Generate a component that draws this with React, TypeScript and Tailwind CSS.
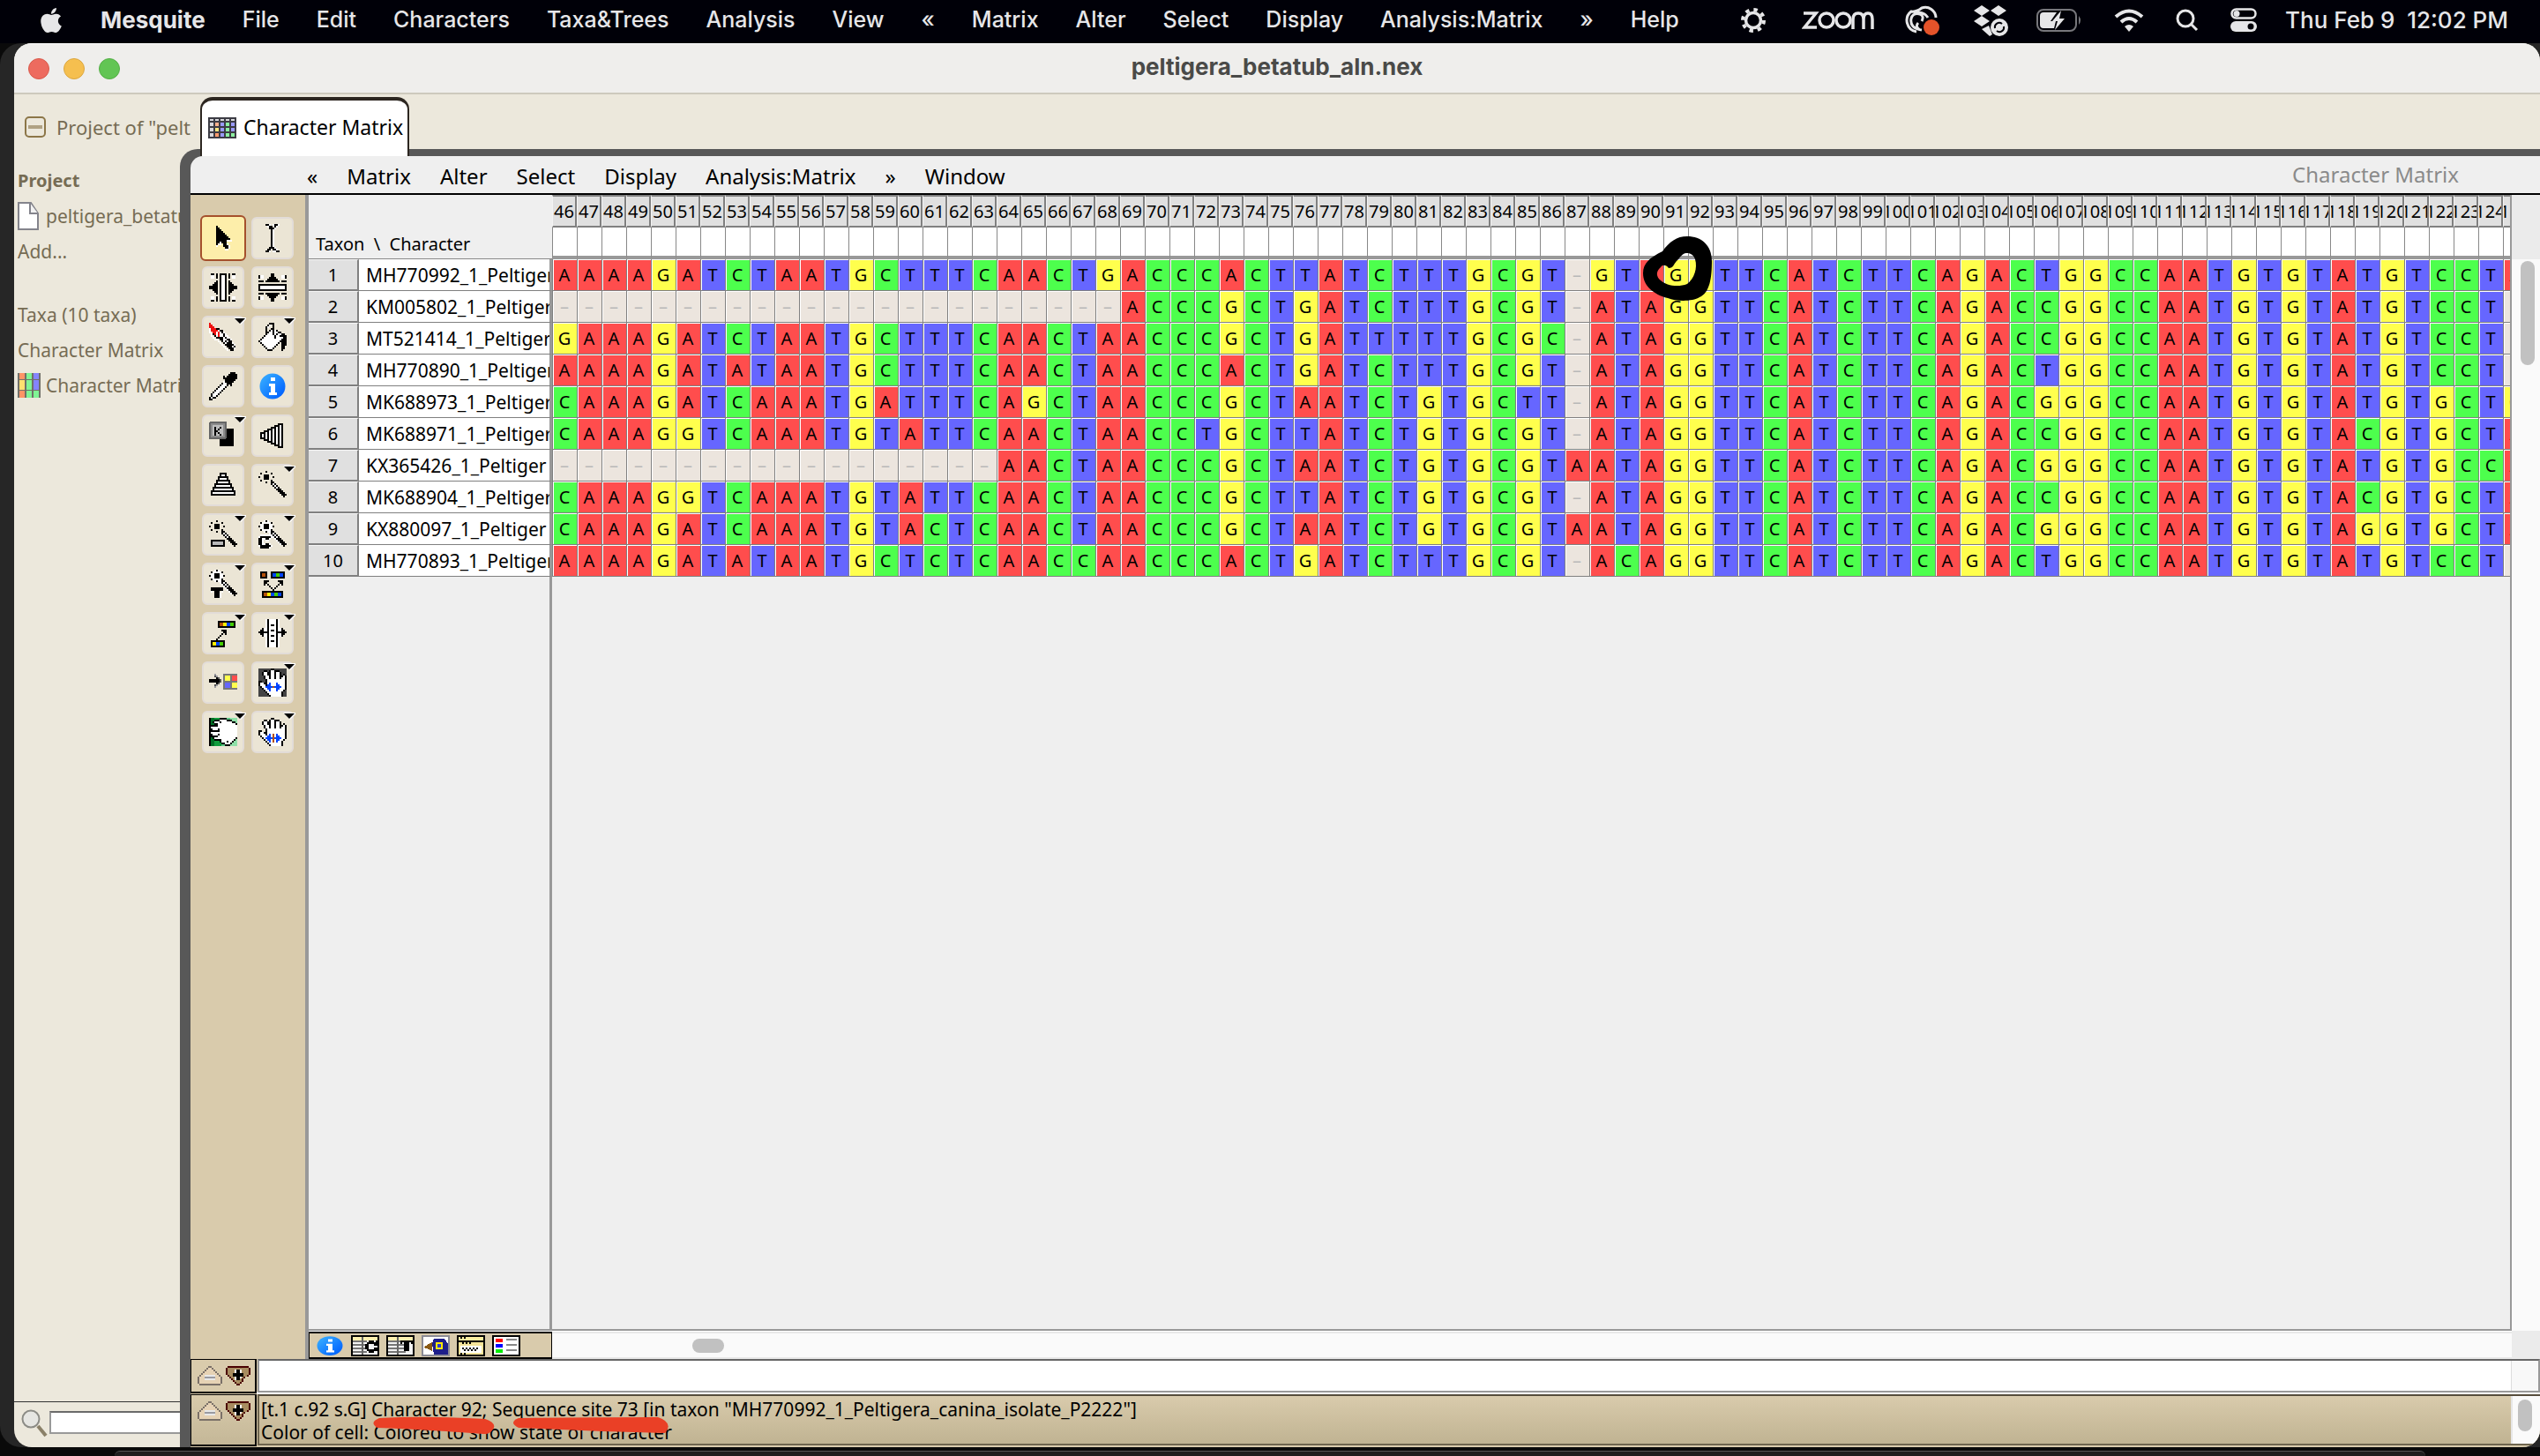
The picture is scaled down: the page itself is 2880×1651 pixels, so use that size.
import React from "react";

const SANS = "font-['Noto_Sans','DejaVu_Sans',sans-serif]";
const SYSTEM = "font-[Inter,'Liberation_Sans',sans-serif]";

/* ---------- matrix data ---------- */

const FIRST_CHARACTER = 46;
const LAST_CHARACTER = 125;
const characters = Array.from({ length: LAST_CHARACTER - FIRST_CHARACTER + 1 }, (_, i) => FIRST_CHARACTER + i);

const taxa = [
  { name: "MH770992_1_Peltiger", seq: "AAAAGATCTAATGCTTTCAACTGACCC" + "ACTTATCTTTGCGT-GTAGGTTCATCT" + "TCAGACTGGCCAATGTGTATGTCCT" + "A" },
  { name: "KM005802_1_Peltiger", seq: "-----------------------ACCC" + "GCTGATCTTTGCGT-ATAGGTTCATCT" + "TCAGACCGGCCAATGTGTATGTCCT" + "-" },
  { name: "MT521414_1_Peltiger", seq: "GAAAGATCTAATGCTTTCAACTAACCC" + "GCTGATTTTTGCGC-ATAGGTTCATCT" + "TCAGACCGGCCAATGTGTATGTCCT" + "-" },
  { name: "MH770890_1_Peltiger", seq: "AAAAGATATAATGCTTTCAACTAACCC" + "ACTGATCTTTGCGT-ATAGGTTCATCT" + "TCAGACTGGCCAATGTGTATGTCCT" + "-" },
  { name: "MK688973_1_Peltiger", seq: "CAAAGATCAAATGATTTCAGCTAACCC" + "GCTAATCTGTGCTT-ATAGGTTCATCT" + "TCAGACGGGCCAATGTGTATGTGCT" + "G" },
  { name: "MK688971_1_Peltiger", seq: "CAAAGGTCAAATGTATTCAACTAACCT" + "GCTTATCTGTGCGT-ATAGGTTCATCT" + "TCAGACCGGCCAATGTGTACGTGCT" + "A" },
  { name: "KX365426_1_Peltiger", seq: "------------------AACTAACCC" + "GCTAATCTGTGCGTAATAGGTTCATCT" + "TCAGACGGGCCAATGTGTATGTGCC" + "A" },
  { name: "MK688904_1_Peltiger", seq: "CAAAGGTCAAATGTATTCAACTAACCC" + "GCTTATCTGTGCGT-ATAGGTTCATCT" + "TCAGACCGGCCAATGTGTACGTGCT" + "A" },
  { name: "KX880097_1_Peltiger", seq: "CAAAGATCAAATGTACTCAACTAACCC" + "GCTAATCTGTGCGTAATAGGTTCATCT" + "TCAGACGGGCCAATGTGTAGGTGCT" + "A" },
  { name: "MH770893_1_Peltiger", seq: "AAAAGATATAATGCTCTCAACCAACCC" + "ACTGATCTTTGCGT-ACAGGTTCATCT" + "TCAGACTGGCCAATGTGTATGTCCT" + "-" },
];

const stateColor: Record<string, string> = {
  A: "bg-[#ff4d4d]",
  C: "bg-[#4dff4d]",
  G: "bg-[#ffff4d]",
  T: "bg-[#6666ff]",
  "-": "bg-[#ece5de] text-[#b8b8b8]",
};

/* ---------- pixel art ---------- */

const inks: Record<string, string> = {
  "#": "#000000", w: "#ffffff", r: "#ee1111", g: "#b8b8b8", b: "#1f1f7a", B: "#0044ff", y: "#ffee00",
  o: "#b4500a", G: "#44cc00", d: "#555555", n: "#8a5a14", m: "#4a0000", t: "#a88c60", c: "#fff3c0", k: "#7a7068", p: "#e6d2b4",
  l: "#e8e8e8", s: "#9a9aa0",
};

function transpose(rows: string[]) {
  return rows[0].split("").map((_, x) => rows.map((row) => row[x] ?? ".").join(""));
}

function Dots({ rows, x = 0, y = 0 }: { rows: string[]; x?: number; y?: number }) {
  return (
    <g>
      {rows.flatMap((row, j) =>
        row.split("").map((ch, i) =>
          inks[ch] ? <rect key={`${i}-${j}`} x={x + i} y={y + j} width="1" height="1" fill={inks[ch]} /> : null,
        ),
      )}
    </g>
  );
}

function Art({ children }: { children: React.ReactNode }) {
  return (
    <svg viewBox="0 0 16 16" className="size-8" shapeRendering="crispEdges" aria-hidden="true">
      {children}
    </svg>
  );
}

const arrow = [
  "................", "....#...........", "....##..........", "....###.........", "....####........", "....#####.......",
  "....######......", "....#######.....", "....########....", "....######www...", "....##w###......", "....#ww.##w.....",
  "....w...###w....", ".........##w....", ".........ww.....",
];
const iBeam = [
  "....##w.w##w....", ".....w##.#w.....", "......###w......",
  ...Array(10).fill(".......#w......."),
  "......###w......", ".....##.##w.....", "....##w.ww##....",
];
const columnSelect = [
  ".##.#.####.#.##.", ".ww.#.#ww#.#.ww.", ".ww.#.#ww#.#.ww.", "......#ww#......", "....#.#ww#.#....", "...##.#ww#.##...",
  "..###.#ww#.###..", "#####.#ww#.#####", "#####.#ww#.#####", "..###.#ww#.###..", "...##.#ww#.##...", "....#.#ww#.#....",
  "......#ww#......", ".ww.#.#ww#.#.ww.", ".ww.#.#ww#.#.ww.", ".##.#.####.#.##.",
];
const brush = [
  "r...............", "rr..............", "rrr.............", "wrrr##..........", "wrrrrw##........", "w.rrwrw#w.......",
  ".w#rwrww#w......", ".w.#wrww#ww.....", "..w.####w#ww....", "...ww.##ww##w...", ".....w.#w#w##...", "......w.#w###w..",
  ".......w.#####w.", "........w.###w#.", ".........w.###w.", "..........w.##..",
];
const bucket = [
  "......###.......", ".....#w.#.......", "....#w..#.......", "....#..##.......", "....#.#w#w#.....", "....##ww#ww##...",
  "....#www#w#ww##.", "...#wwwww#ww####", "..#wwwwww#wwww##", ".#wwwwwwwwwww###", "#wwwwwwwwwww####", ".#wwwwwwwww#.###",
  "..#wwwwwww#..###", "...#wwwww#...##.", "....#www#....##.", ".....###.....#..",
];
const dropper = [
  "............###.", "...........#####", "........#.######", "........########", ".........######.", "........w#####..",
  ".......#ww###...", "......#www#.#...", ".....#www#......", "....#www#.......", "...#www#........", "..#www#.........",
  ".#www#..........", ".#ww#...........", "#w##............", "##..............",
];
const wand = [
  "....#...........", ".#.....#........", "...###..........", "#..###..#.......", "...###..........", ".#.....#........",
  "....#..##.......", ".......#w#......", "........#w#.....", ".........#w#....", "..........###...", "...........###..",
  "............###.", ".............###", "..............#.",
];
const halo = [
  "...www..........", ".wwwwwww........", ".wwwwwww........", "wwwwwwwww.......", ".wwwwwww........", ".wwwwwww........",
  "...wwwwww.......", "......w..w......", ".......w..w.....", "........w..w....", ".........w..w...", "..........w..w..",
  "...........w..w.", "............w..w",
];
const letterC = [".wwwwww.", "w######w", "##ww##w.", "##w.ww..", "##w.....", "##ww##w.", "w######w", ".#####w."];
const letterT = ["#######.", "#######.", "w.###.w.", "..###w..", "..###w..", "..###w.."];
const joinArrows = ["###.....###", "##.......##", "#.#.....#.#", "...#...#...", "....#.#....", ".....#....."];
const upArrow = ["...###", "....##", "...#.#", "..#...", ".#....", "#....."];
const doubleArrow = ["..B...B..", ".BB...BB.", "BBBBoBBBB", ".BB...BB.", "..B...B.."];
const handRows = [
  ".......##.......", "...##.#ww###....", "..#ww##ww#ww#...", "..#ww##ww#ww#.#.", "...#ww#ww#ww##w#", "...#ww#ww#ww#ww#",
  "....#wwwwwwwwww#", "##..#wwwwwwwwww#", "#ww##wwwwwwwwww#", "#www#wwwwwwwwww#", ".#wwwwwwwwwwwww#", "..#wwwwwwwwwwww#",
  "...#wwwwwwwwww#.", "....#wwwwwwww#..", ".....#wwwwwww#..", "......#wwwwww#..",
];
const grabRows = [
  "......####......", "...###wwww###...", "..#www#wwwwww##.", "...##wwwwwwwwww#", ".####wwwwwwwwwww", "#wwwwwwwwwwwwwww",
  "##www#wwwwwwwwww", ".#####wwwwwwwwww", "#wwwwwwwwwwwwwww", "##www#wwwwwwwwww", ".####wwwwwwwwwww", "..#wwwwwwwwwwww#",
  "...####wwwwwww#.", "......#www#ww#..", ".......##www#...", ".........###....",
];

function Strip({ x, y, colors }: { x: number; y: number; colors: string }) {
  return (
    <>
      <rect x={x} y={y} width={colors.length * 2 + 2} height="4" fill="#000" />
      {colors.split("").map((c, i) => (
        <rect key={i} x={x + 1 + i * 2} y={y + 1} width="2" height="2" fill={inks[c]} />
      ))}
    </>
  );
}

function Staircase({ upright = false }: { upright?: boolean }) {
  return (
    <g transform={upright ? "rotate(90 8 8)" : undefined}>
      {[4, 6, 8, 10, 12, 14].map((h, i) => (
        <rect key={h} x={1 + i * 2} y={8 - h / 2} width="3" height={h} fill="#000" />
      ))}
      {[4, 6, 8, 10, 12, 14].map((h, i) => (
        <rect key={h} x={2 + i * 2} y={9 - h / 2} width="1" height={h - 2} fill="#fff" />
      ))}
    </g>
  );
}

function InfoIcon({ className }: { className: string }) {
  return (
    <svg viewBox="0 0 32 32" preserveAspectRatio="none" className={className} aria-hidden="true">
      <defs>
        <linearGradient id="info" x1="0" y1="0" x2="1" y2="1">
          <stop offset="0.2" stopColor="#2fa2ff" />
          <stop offset="0.9" stopColor="#0061ff" />
        </linearGradient>
      </defs>
      <circle cx="16" cy="16" r="14.5" fill="url(#info)" />
      <path d="M14 6h5v4h-5zM12 13h7v10h2v3h-9v-3h2v-7h-2z" fill="#fff" />
    </svg>
  );
}

const tools: { label: string; menu?: boolean; icon: React.ReactNode }[] = [
  { label: "Arrow", icon: <Art><Dots rows={arrow} /></Art> },
  { label: "Edit text", icon: <Art><Dots rows={iBeam} /></Art> },
  { label: "Select columns", icon: <Art><Dots rows={columnSelect} /></Art> },
  { label: "Select rows", icon: <Art><Dots rows={transpose(columnSelect)} /></Art> },
  { label: "Brush", menu: true, icon: <Art><Dots rows={brush} /></Art> },
  { label: "Fill", menu: true, icon: <Art><Dots rows={bucket} /></Art> },
  { label: "Pick color", icon: <Art><Dots rows={dropper} /></Art> },
  { label: "Information", icon: <InfoIcon className="size-8" /> },
  {
    label: "Key states", menu: true,
    icon: (
      <Art>
        <rect x="6" y="4" width="8" height="10" fill="#000" />
        <rect x="0" y="0" width="10" height="10" rx="1" fill="#666" />
        <rect x="1" y="1" width="8" height="8" fill="#8c8c8c" />
        <rect x="2" y="2" width="6" height="6" fill="#bdbdbd" />
        <Dots x={3} y={3} rows={["#..#", "#.#.", "##..", "#.#.", "#..#"]} />
      </Art>
    ),
  },
  { label: "Widen right", icon: <Art><Staircase /></Art> },
  { label: "Widen down", icon: <Art><Staircase upright /></Art> },
  { label: "Wand", menu: true, icon: <Art><Dots rows={wand} /></Art> },
  {
    label: "Wand for rows", menu: true,
    icon: (
      <Art>
        <Dots rows={wand} />
        <rect x="1" y="11" width="8" height="4" fill="#000" />
        <rect x="2" y="12" width="6" height="2" fill="#b8b8b8" />
      </Art>
    ),
  },
  { label: "Wand for characters", menu: true, icon: <Art><Dots rows={halo} /><Dots rows={wand} /><Dots rows={letterC} y={8} /></Art> },
  { label: "Wand for taxa", menu: true, icon: <Art><Dots rows={halo} /><Dots rows={wand} /><Dots rows={letterT} x={1} y={10} /></Art> },
  {
    label: "Split block", menu: true,
    icon: <Art><Strip x={1} y={1} colors="o" /><Strip x={7} y={1} colors="BGB" /><Dots rows={joinArrows} x={3} y={6} /><Strip x={2} y={12} colors="oyBGB" /></Art>,
  },
  {
    label: "Move block", menu: true,
    icon: <Art><Strip x={5} y={1} colors="oyBG" /><Dots rows={upArrow} x={4} y={6} /><Strip x={1} y={12} colors="yBG" /></Art>,
  },
  {
    label: "Spread columns", menu: true,
    icon: (
      <Art>
        <rect x="4" y="0" width="8" height="16" fill="#fff" />
        <path d="M5 0h1v16h-1zM10 0h1v16h-1zM7 3h2v1h-2zM7 6h2v1h-2zM7 9h2v1h-2zM7 12h2v1h-2z" fill="#000" />
        <Dots y={5} rows={["..#w........w#..", ".##w........w##.", "#####......#####", ".##w........w##.", "..#w........w#.."]} />
      </Art>
    ),
  },
  {
    label: "Send to cells",
    icon: (
      <Art>
        <Dots y={3} rows={["...s....", "...ds...", "....#d..", "######d.", "######d.", "....#d..", "...ds...", "...s...."]} />
        <rect x="8" y="3" width="8" height="9" fill="#777" />
        <rect x="9" y="4" width="3" height="3" fill="#ffff4d" />
        <rect x="13" y="4" width="3" height="3" fill="#ff4d4d" />
        <rect x="9" y="8" width="3" height="3" fill="#6666ff" />
        <rect x="13" y="8" width="3" height="3" fill="#ffff4d" />
      </Art>
    ),
  },
  { label: "Shift block", menu: true, icon: <Art><rect width="16" height="16" fill="#444" /><Dots rows={handRows} /><Dots rows={doubleArrow} x={4} y={8} /></Art> },
  {
    label: "Grab sequence", menu: true,
    icon: (
      <Art>
        <rect width="16" height="16" fill="#8fe0a8" />
        <rect width="12" height="16" fill="#5cc484" />
        <rect width="7" height="16" fill="#109c3c" />
        <rect width="3" height="16" fill="#006e24" />
        <rect width="1" height="16" fill="#000" />
        <Dots rows={grabRows} />
      </Art>
    ),
  },
  { label: "Hand", menu: true, icon: <Art><Dots rows={handRows} /><Dots rows={doubleArrow} x={4} y={9} /><rect x="8" y="9" width="1" height="5" fill="#b4500a" /></Art> },
];

/* ---------- macOS menu bar ---------- */

const appMenus = ["File", "Edit", "Characters", "Taxa&Trees", "Analysis", "View", "«", "Matrix", "Alter", "Select", "Display", "Analysis:Matrix", "»", "Help"];

function MenuBar() {
  return (
    <header className={`${SYSTEM} flex h-[49px] shrink-0 items-center bg-[#000008] pb-1 text-[25px] font-medium text-[#e6e6e8]`}>
      <svg viewBox="0 0 384 512" className="ml-11 h-8 w-7 fill-[#e6e6e8]" aria-hidden="true">
        <path d="M318.700 268.700c-.2-36.700 16.400-64.400 50-84.800-18.800-26.900-47.200-41.700-84.700-44.600-35.500-2.800-74.300 20.700-88.500 20.700-15 0-49.400-19.700-76.400-19.700C63.300 141.200 4 184.800 4 273.500q0 39.300 14.400 81.200c12.800 36.700 59 126.700 107.200 125.200 25.200-.6 43-17.900 75.800-17.900 31.800 0 48.300 17.900 76.400 17.900 48.600-.7 90.400-82.500 102.600-119.300-65.200-30.700-61.700-90-61.700-91.900zm-56.600-164.200c27.300-32.400 24.800-61.900 24-72.500-24.100 1.400-52 16.400-67.900 34.900-17.500 19.800-27.800 44.300-25.600 71.900 26.100 2 49.900-11.400 69.500-34.300z" />
      </svg>
      <nav className="ml-[42px] flex items-center gap-[42px]" aria-label="Application menus">
        <button className="text-[26px] font-bold">Mesquite</button>
        {appMenus.map((m) => <button key={m}>{m}</button>)}
      </nav>
      <div className="ml-auto flex items-center pr-9">
        <svg viewBox="0 0 30 30" className="mr-10 size-[30px]" fill="none" stroke="#e6e6e8" aria-hidden="true">
          <circle cx="15" cy="15" r="8.500" strokeWidth="3.500" />
          <circle cx="15" cy="15" r="12" strokeWidth="4" strokeDasharray="4.400 5.025" />
        </svg>
        <svg viewBox="0 0 82 24" className="mr-8 h-6 w-[82px]" fill="none" stroke="#e6e6e8" strokeWidth="3.500" aria-hidden="true">
          <path d="M2 4h14L3 20h14M58 22V11q0-7 6-7t6 7v11M70 11q0-7 5-7t5 7v11" />
          <circle cx="28" cy="12" r="8" />
          <circle cx="47" cy="12" r="8" />
        </svg>
        <svg viewBox="0 0 44 34" className="mr-9 h-[34px] w-11" fill="none" stroke="#e6e6e8" strokeWidth="3" aria-hidden="true">
          <path d="M16 30A13 13 0 0 1 10 7Q16 8 22 3A12 12 0 0 1 38 14M22 28Q8 26 10 15Q12 8 20 10Q25 12 22 18M20 28Q14 24 18 20M14 9Q24 6 29 14" />
          <circle cx="33" cy="25" r="9" fill="#e4532a" stroke="none" />
        </svg>
        <svg viewBox="0 0 40 36" className="mr-8 h-9 w-10 fill-[#e6e6e8]" aria-hidden="true">
          <path d="M10 1l9 6-9 6-9-6zM29 1l9 6-9 6-9-6zM10 13l9 6-9 6-9-6zM10 28l8-4 4 10-3 2z" />
          <circle cx="30" cy="26" r="10" />
          <path d="M25 27a5 5 0 0 1 8-5M35 25a5 5 0 0 1-8 5" stroke="#000008" strokeWidth="2" fill="none" />
        </svg>
        <svg viewBox="0 0 52 26" className="mr-9 h-[26px] w-[52px]" aria-hidden="true">
          <rect x="1" y="1" width="44" height="24" rx="7" fill="none" stroke="#77777c" strokeWidth="2" />
          <path d="M48 8q4 5 0 10z" fill="#77777c" />
          <path d="M8 4h15l-7 10h6l-2 8H8q-4 0-4-4V8q0-4 4-4zM28 2L18 14h6l-3 10 11-13h-6z" fill="#e6e6e8" />
        </svg>
        <svg viewBox="0 0 34 26" className="mr-9 h-[26px] w-[34px]" fill="none" stroke="#e6e6e8" strokeWidth="4" aria-hidden="true">
          <path d="M2 9Q17-4 32 9M8 15Q17 7 26 15" />
          <path d="M12 20q5-4 10 0l-5 6z" fill="#e6e6e8" stroke="none" />
        </svg>
        <svg viewBox="0 0 26 26" className="mr-9 size-[26px]" fill="none" stroke="#e6e6e8" strokeWidth="3" aria-hidden="true">
          <circle cx="11" cy="11" r="9" />
          <path d="M17 17l7 7" />
        </svg>
        <svg viewBox="0 0 30 28" className="mr-8 h-7 w-[30px]" aria-hidden="true">
          <rect x="1.500" y="1.500" width="27" height="10" rx="5" fill="none" stroke="#e6e6e8" strokeWidth="2.500" />
          <circle cx="7" cy="6.500" r="3.500" fill="#e6e6e8" />
          <rect y="15" width="30" height="12" rx="6" fill="#e6e6e8" />
          <circle cx="23" cy="21" r="3.500" fill="#000008" />
        </svg>
        <time className="text-[26px] whitespace-pre">Thu Feb 9  12:02 PM</time>
      </div>
    </header>
  );
}

/* ---------- window parts ---------- */

function TitleBar() {
  return (
    <div className={`${SYSTEM} relative flex h-[58px] shrink-0 items-center border-b-2 border-[#cdc9bd] border-t border-t-white bg-[#efeeec] pl-4`}>
      <div className="flex gap-4">
        <button aria-label="Close" className="size-6 rounded-full border border-[#d85a4c] bg-[#ed6b5f]" />
        <button aria-label="Minimize" className="size-6 rounded-full border border-[#dba63f] bg-[#f5bf4f]" />
        <button aria-label="Zoom" className="size-6 rounded-full border border-[#54ae46] bg-[#62c554]" />
      </div>
      <h1 className="absolute inset-x-0 pb-1 text-center text-[26px] font-bold text-[#4a4a48]">peltigera_betatub_aln.nex</h1>
    </div>
  );
}

function TabStrip() {
  return (
    <div className="flex h-[62px] shrink-0 bg-[#ece8dc]">
      <div className="flex w-[208px] items-center gap-3 overflow-hidden pl-3 pt-3 text-[22px] whitespace-nowrap text-[#766c54]">
        <svg viewBox="0 0 24 24" className="size-6 shrink-0" fill="none" aria-hidden="true">
          <rect x="1" y="1" width="22" height="22" rx="4" stroke="#8c7648" strokeWidth="2" />
          <path d="M4 12h16" stroke="#b0a284" strokeWidth="4" />
        </svg>
        <span>Project of "pelt</span>
      </div>
      <button className="relative z-10 ml-[3px] mt-[3px] flex h-[67px] w-[237px] items-center gap-2 rounded-t-[14px] border-2 border-t-4 border-b-0 border-[#2c2620] bg-white pl-[7px] pb-0.5 text-[23px] whitespace-nowrap text-black">
        <svg viewBox="0 0 32 24" className="h-6 w-8 shrink-0" shapeRendering="crispEdges" aria-hidden="true">
          <rect width="32" height="24" fill="#3c3c44" />
          {[0, 1, 2, 3].map((j) =>
            [0, 1, 2, 3, 4].map((i) => {
              const body = [["#ffb08c", "#9a9aff", "#8cf0a0", "#9a9aff"], ["#ffe880", "#9a9aff", "#8cf0a0", "#9a9aff"], ["#ff9a6c", "#9a9aff", "#8cf0a0", "#8cf0a0"]];
              const fill = j === 0 || i === 0 ? "#d8d8dc" : body[j - 1][i - 1];
              return <rect key={`${i}-${j}`} x={2 + i * 6} y={j === 0 ? 2 : j * 6} width="4" height={j === 0 ? 2 : 4} fill={fill} />;
            }),
          )}
        </svg>
        Character Matrix
      </button>
    </div>
  );
}

function Sidebar() {
  return (
    <aside className="flex w-[188px] shrink-0 flex-col overflow-hidden text-[21px] leading-10 whitespace-nowrap text-[#766c54]">
      <div className="flex-1 pl-1">
        <h2 className="mt-4 text-[20px] font-bold">Project</h2>
        <a href="#file" className="flex items-center gap-2">
          <svg viewBox="0 0 24 32" className="h-8 w-6 shrink-0" aria-hidden="true">
            <path d="M1 1h14l8 12v18H1z" fill="#fff" stroke="#84848c" strokeWidth="2" />
            <path d="M14 1v12h9" fill="#f2f2f2" stroke="#84848c" strokeWidth="2" />
          </svg>
          peltigera_betatu
        </a>
        <a href="#add" className="block">Add...</a>
        <a href="#taxa" className="mt-8 block">Taxa (10 taxa)</a>
        <a href="#matrices" className="block">Character Matrix</a>
        <a href="#matrix" className="flex items-center gap-1.5">
          <svg viewBox="0 0 26 28" className="h-7 w-[26px] shrink-0" shapeRendering="crispEdges" aria-hidden="true">
            <rect width="26" height="28" fill="#707068" />
            <path d="M2 0h6v7h-6zM2 20h6v8h-6z" fill="#ff9466" />
            <path d="M2 8h6v11h-6z" fill="#ffe070" />
            <path d="M10 0h6v7h-6zM10 8h6v11h-6zM10 20h6v8h-6zM18 20h6v8h-6z" fill="#80f494" />
            <path d="M18 0h6v7h-6zM18 8h6v11h-6z" fill="#8484ff" />
          </svg>
          Character Matri
        </a>
      </div>
      <div className="flex h-[52px] items-start border-t border-[#333] pl-2 pt-2">
        <svg viewBox="0 0 30 32" className="h-8 w-[30px] shrink-0" aria-hidden="true">
          <path d="M19 19l9 11" stroke="#8a8068" strokeWidth="4" />
          <circle cx="11" cy="11" r="9.500" fill="#e6e6e2" stroke="#8c8c86" strokeWidth="2" />
        </svg>
        <input aria-label="Search project" className="ml-0.5 mt-0.5 h-[26px] w-full border-t-2 border-b-2 border-l-2 border-t-[#6a6a6a] border-b-[#999] border-l-[#999] bg-white outline-none" />
      </div>
    </aside>
  );
}

const matrixMenus = ["«", "Matrix", "Alter", "Select", "Display", "Analysis:Matrix", "»", "Window"];

function MatrixMenu() {
  return (
    <div className="flex h-[44px] shrink-0 items-center justify-between rounded-tl-[14px] border-b-2 border-black bg-[#efefef] pl-[132px] pr-[92px] pt-1 text-2xl">
      <nav className="flex gap-[33px]" aria-label="Matrix menus">
        {matrixMenus.map((m) => <button key={m}>{m}</button>)}
      </nav>
      <span className="pb-1 text-[#8a8a8a]">Character Matrix</span>
    </div>
  );
}

function ToolPalette() {
  return (
    <div className="w-[134px] shrink-0 border-r-4 border-[#999] bg-[#d9cbac] pl-[13px] pt-[25px]">
      <div className="grid grid-cols-[48px_48px] gap-2">
        {tools.map((tool, i) => (
          <button
            key={tool.label}
            aria-label={tool.label}
            className={
              i === 0
                ? "relative flex size-12 items-center justify-center rounded-sm bg-[#fdeeaa] outline-2 outline-[#a5502c]"
                : "relative flex size-12 items-center justify-center rounded-md border-2 border-[#e2dcd8] bg-[#ebe5d5]"
            }
          >
            {tool.icon}
            {tool.menu && (
              <svg viewBox="0 0 14 8" className="absolute -right-1 top-0 h-2 w-3.5" aria-hidden="true">
                <path d="M0 0h14v2l-6 6z" fill="#fff" />
                <path d="M1 1h12l-6 6z" fill="#000" />
              </svg>
            )}
          </button>
        ))}
      </div>
    </div>
  );
}

function MatrixTable() {
  return (
    <div className="relative min-w-0 flex-1 overflow-hidden border-b-2 border-r-2 border-[#999] bg-[#efefef]">
      <div className="absolute inset-y-0 left-[273px] w-[3px] bg-[#999]" />
      <table className="relative w-[2516px] table-fixed border-separate border-spacing-0 text-center text-[20px] leading-8">
        <colgroup>
          <col className="w-[57px]" />
          <col className="w-[219px]" />
          {characters.map((c) => <col key={c} className="w-7" />)}
        </colgroup>
        <thead>
          <tr className="h-[37px]">
            <th colSpan={2} rowSpan={2} scope="col" className="border-b border-[#888] bg-[#efefef] p-0 pl-2 text-left align-bottom text-[20px] font-normal whitespace-pre">
              Taxon  \  Character
            </th>
            {characters.map((c) => (
              <th key={c} scope="col" className="border-y-2 border-r-2 border-l border-[#808080] border-l-[#f4f4f4] bg-[#e0e0e0] p-0 font-normal">
                <div className="flex justify-center overflow-hidden"><span>{c}</span></div>
              </th>
            ))}
          </tr>
          <tr className="h-9">
            {characters.map((c) => <td key={c} className="border-b-4 border-l border-[#999] border-l-[#888] bg-white p-0" />)}
          </tr>
        </thead>
        <tbody>
          {taxa.map((taxon, r) => (
            <tr key={taxon.name} className="h-9">
              <th scope="row" className="border-t border-r-2 border-b-2 border-[#808080] border-t-[#f6f6f6] bg-[#e0e0e0] p-0 font-normal">{r + 1}</th>
              <td className="border-r-[3px] border-b border-[#999] border-b-[#808080] bg-white p-0 pl-2 text-left">
                <div className="overflow-hidden text-[21px] whitespace-nowrap">{taxon.name}</div>
              </td>
              {taxon.seq.split("").map((state, i) => (
                <td key={i} className="border-l border-b border-[#808080] p-0">
                  <div className={`flex h-[35px] items-center justify-center overflow-hidden border-t border-l border-white pr-0.5 ${stateColor[state]}`}>
                    {state === "-" ? "–" : state}
                  </div>
                </td>
              ))}
            </tr>
          ))}
        </tbody>
      </table>
      <svg viewBox="0 0 80 76" className="absolute left-[1511px] top-[45px] h-[76px] w-20" aria-hidden="true">
        <path
          fillRule="evenodd"
          d="M52 2C68 2 80 12 80 30C80 48 78 66 66 71C58 76 40 76 30 72C14 68 2 58 2 44C2 32 10 26 24 19C32 8 40 2 52 2ZM52 21C47 20 44 26 40 30C36 35 36 38 31 38C28 34 24 34 22 37C16 42 17 48 22 52C28 58 42 60 52 56C60 50 64 38 61 28C59 23 56 21 52 21Z"
        />
      </svg>
    </div>
  );
}

function MiniButton({ label, children }: { label: string; children: React.ReactNode }) {
  return (
    <button aria-label={label} className="h-6 w-8">
      <svg viewBox="0 0 16 12" preserveAspectRatio="none" className="h-6 w-8" shapeRendering="crispEdges" aria-hidden="true">
        {children}
      </svg>
    </button>
  );
}

function ListGlyph({ letter }: { letter: string[] }) {
  return (
    <>
      <rect width="16" height="12" />
      <rect x="1" y="1" width="14" height="2" fill="#fdf0b0" />
      <rect x="1" y="3" width="14" height="8" fill="#f2f2f2" />
      <path d="M1 3h10v1H1zM1 5h10v1H1zM1 7h10v1H1zM1 9h10v1H1z" fill="#777" />
      <path d="M6 1h1v10h-1z" fill="#666" />
      <Dots rows={letter} x={8} y={3} />
    </>
  );
}

function HorizontalRow() {
  return (
    <div className="flex h-8 shrink-0 border-t border-white">
      <div className="flex w-[276px] shrink-0 items-center gap-2 border-t-2 border-b-2 border-l border-r border-black bg-[#d9cbac] pl-[7px]">
        <button aria-label="Information" className="h-6 w-8"><InfoIcon className="h-6 w-8" /></button>
        <MiniButton label="Character list"><ListGlyph letter={[".w###.#", "w######", "##w..##", "##w....", "##w..##", "w######", ".w###.."]} /></MiniButton>
        <MiniButton label="Taxon list"><ListGlyph letter={["#######", "#.###.#", "..###..", "..###..", "..###..", ".w###w."]} /></MiniButton>
        <MiniButton label="Bird view">
          <rect width="16" height="12" fill="#8a8a94" />
          <rect x="1" y="1" width="14" height="10" fill="#fff" />
          <path d="M7 2h6l2 3v6H7l-1-6z" fill="#1f1f8a" />
          <path d="M6 4v5l-2-1-3-1 3-2z" fill="#8a5a14" />
          <rect x="8" y="4" width="4" height="4" fill="#ffe800" />
          <rect x="9" y="5" width="2" height="2" fill="#2a3ad8" />
        </MiniButton>
        <MiniButton label="Footnotes">
          <rect width="16" height="12" />
          <rect x="1" y="1" width="14" height="2" fill="#fdeea0" />
          <rect x="1" y="4" width="14" height="7" fill="#f5e49a" />
          <rect x="2" y="6" width="12" height="4" fill="#fff" />
          <path d="M2 1h1v1h-1zM4 1h1v1h-1zM2 10h1v1h-1zM4 10h1v1h-1zM3 4h1v1h-1zM5 4h1v1h-1zM7 4h1v1h-1zM3 7h1v1h-1zM4 8h1v1h-1zM5 7h1v1h-1zM6 8h1v1h-1zM7 7h1v1h-1zM8 8h1v1h-1zM9 7h1v1h-1zM10 8h1v1h-1zM11 7h1v1h-1z" />
        </MiniButton>
        <MiniButton label="Legend">
          <rect width="16" height="12" />
          <rect x="1" y="1" width="14" height="10" fill="#fff" />
          <rect x="2" y="2" width="4" height="2" fill="#f00" />
          <rect x="2" y="5" width="4" height="2" fill="#00f" />
          <rect x="2" y="8" width="4" height="2" fill="#0e0" />
          <path d="M8 2h6v1H8zM8 5h6v1H8zM8 8h6v1H8z" fill="#888" />
        </MiniButton>
      </div>
      <div className="flex flex-1 items-center border-y-2 border-[#e8e8e8] bg-[#fafafa] pl-[159px]">
        <div className="h-4 w-9 rounded-full bg-[#c1c1c1]" />
      </div>
    </div>
  );
}

const minusDrop = [
  "......kk......", ".....kppk.....", "....kppppk....", "...kppppppk...", "..kppppppppk..", ".kppllllllppk.",
  "kpppsssssspppk", "kpppllllllpppk", "kppppppppppppk", "kppppppppppppk", ".kkkkkkkkkkkk.",
];
const plusDrop = [
  ".mmmmmmmmmmmm.", "mttttttttttttm", "mttttw##wttttm", "mttttw##wttttm", "mttt######tttm", ".mtt######ttm.",
  "..mttw##wtm...", "...mtw##tm....", "....mttttm....", ".....mttm.....", "......mm......",
];

function Droplets() {
  return (
    <svg viewBox="0 0 30 12" className="h-6 w-[60px]" shapeRendering="crispEdges" aria-hidden="true">
      <Dots rows={minusDrop} />
      <Dots rows={plusDrop} x={16} />
    </svg>
  );
}

function Annotations() {
  return (
    <section aria-label="Annotations" className="shrink-0 bg-[#d9cbac]">
      <div className="flex h-10">
        <div className="h-[39px] w-[75px] shrink-0 border border-r-2 border-b-2 border-black pl-[7px] pt-[7px]"><Droplets /></div>
        <div className="flex flex-1 border-b-[3px] border-white">
          <div className="ml-px flex h-[38px] flex-1 border-t-2 border-b-2 border-l-2 border-r-2 border-[#999] border-t-[#666] bg-white">
            <div className="ml-auto w-[31px] border-l border-[#ddd] bg-[#f8f8f8]" />
          </div>
        </div>
      </div>
      <div className="flex h-[60px]">
        <div className="h-[59px] w-[75px] shrink-0 border border-r-2 border-b-2 border-black bg-linear-to-b from-[#d9cbac] to-[#c4b797] pl-[7px] pt-[7px]"><Droplets /></div>
        <div className="relative ml-px flex h-[58px] min-w-0 flex-1 border-2 border-r-0 border-[#6e654e] border-t-[#564d3c] bg-linear-to-b from-[#d9cbac] to-[#c0b392] pl-0.5">
          <p className="mt-0.5 flex-1 text-[21px] leading-[26px] text-black">
            [t.1 c.92 s.G] Character 92; Sequence site 73 [in taxon "MH770992_1_Peltigera_canina_isolate_P2222"]
            <br />
            Color of cell: Colored to show state of character
          </p>
          <svg viewBox="0 0 340 24" className="absolute left-[128px] top-[22px] h-6 w-[340px]" fill="#ea4026" aria-hidden="true">
            <path d="M8 3Q60 0 128 4Q140 8 138 14Q134 22 126 21Q60 16 6 14Q-4 8 8 3Z" />
            <path d="M166 3Q230 2 324 2Q342 8 332 20Q250 18 166 14Q154 8 166 3Z" />
          </svg>
          <div className="w-[33px] border-l-2 border-[#e6e6e6] bg-[#fafafa] pl-1.5 pt-1">
            <div className="h-9 w-4 rounded-full bg-[#c1c1c1]" />
          </div>
        </div>
      </div>
    </section>
  );
}

export default function App() {
  return (
    <div className={`${SANS} flex min-h-screen flex-col overflow-hidden bg-[#0a0a0a] text-black`}>
      <MenuBar />
      <div className="flex flex-1 rounded-l-[24px] bg-[#262626] pl-4">
        <main className="flex min-w-0 flex-1 flex-col overflow-hidden rounded-[20px] bg-[#ece8dc]">
          <TitleBar />
          <TabStrip />
          <div className="flex min-h-0 flex-1">
            <Sidebar />
            <div className="flex min-w-0 flex-1 flex-col rounded-tl-[20px] border-t-8 border-l-[12px] border-[#585858] bg-[#585858]">
              <MatrixMenu />
              <div className="flex min-h-0 flex-1 bg-[#ebebeb]">
                <ToolPalette />
                <div className="flex min-w-0 flex-1 flex-col">
                  <MatrixTable />
                  <HorizontalRow />
                </div>
                <div className="mb-8 mt-[73px] w-8 shrink-0 bg-[#fafafa] pl-2.5 pt-0.5">
                  <div className="h-[118px] w-4 rounded-full bg-[#c1c1c1]" />
                </div>
              </div>
              <Annotations />
            </div>
          </div>
        </main>
      </div>
      <div className="mx-[130px] mt-1 h-1.5 shrink-0 rounded-t-xl border-t border-[#555] bg-[#1e1e1e]" />
    </div>
  );
}
